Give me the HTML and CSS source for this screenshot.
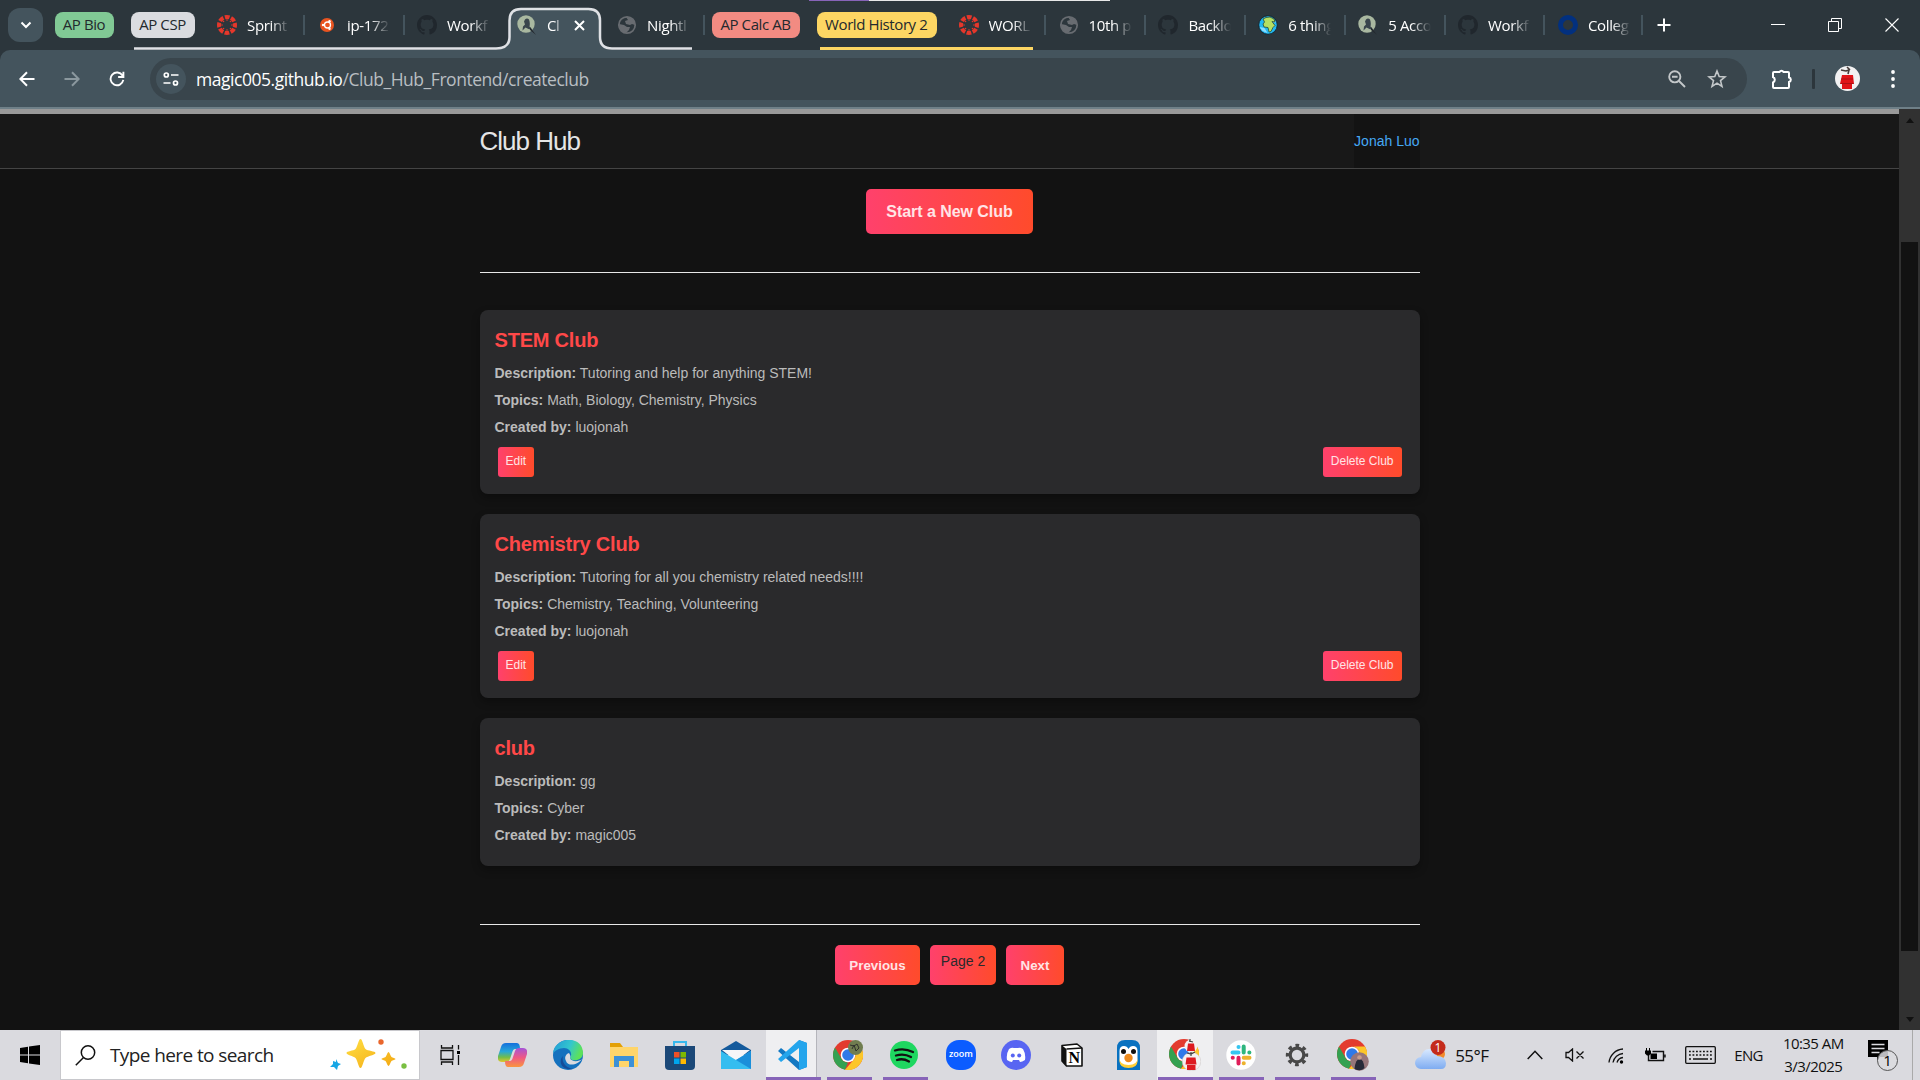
FILE: index.html
```html
<!DOCTYPE html>
<html lang="en">
<head>
<meta charset="utf-8">
<title>Club Hub</title>
<link rel="stylesheet" href="styles.css">
</head>
<body>
<svg class="defs" width="0" height="0" aria-hidden="true">
  <symbol id="canvas" viewBox="0 0 20 20">
    <circle cx="10" cy="10" r="8" fill="none" stroke="#e5372b" stroke-width="4" stroke-dasharray="4.7 1.58" stroke-dashoffset="2.35"/>
    <g fill="#e5372b"><circle cx="10" cy="5" r=".8"/><circle cx="10" cy="15" r=".8"/><circle cx="5" cy="10" r=".8"/><circle cx="15" cy="10" r=".8"/><circle cx="6.5" cy="6.5" r=".8"/><circle cx="13.5" cy="6.5" r=".8"/><circle cx="6.5" cy="13.5" r=".8"/><circle cx="13.5" cy="13.5" r=".8"/></g>
  </symbol>
  <symbol id="github" viewBox="0 0 16 16">
    <path fill="#20272d" d="M8 0C3.58 0 0 3.58 0 8c0 3.54 2.29 6.53 5.47 7.59.4.07.55-.17.55-.38 0-.19-.01-.82-.01-1.49-2.01.37-2.53-.49-2.69-.94-.09-.23-.48-.94-.82-1.13-.28-.15-.68-.52-.01-.53.63-.01 1.08.58 1.23.82.72 1.21 1.87.87 2.33.66.07-.52.28-.87.51-1.07-1.78-.2-3.64-.89-3.64-3.95 0-.87.31-1.59.82-2.15-.08-.2-.36-1.02.08-2.12 0 0 .67-.21 2.2.82.64-.18 1.32-.27 2-.27s1.36.09 2 .27c1.53-1.04 2.2-.82 2.2-.82.44 1.1.16 1.92.08 2.12.51.56.82 1.27.82 2.15 0 3.07-1.87 3.75-3.65 3.95.29.25.54.73.54 1.48 0 1.07-.01 1.93-.01 2.2 0 .21.15.46.55.38A8.01 8.01 0 0 0 16 8c0-4.42-3.58-8-8-8z"/>
  </symbol>
  <symbol id="globe" viewBox="0 0 20 20">
    <circle cx="10" cy="10" r="8.2" fill="#2c363c" stroke="#686c71" stroke-width="1.7"/>
    <path fill="#686c71" d="M2 9l5 1 3 2 3 0-1 3-3 3C5 18 2 14 2 9zM9 2c3 0 6 1 8 4l1 4-3-1-2 1-4-1-1-3 3-1z"/>
  </symbol>
  <symbol id="pale" viewBox="0 0 20 20">
    <circle cx="9" cy="9" r="8.700" fill="#a9b8a0"/>
    <path fill="#39454c" d="M8 4.500q2-2 4 0c1 3 1 5 .5 7l3 3.500-4-1-3-1.500-3 3 .5-4 2-2-1-3z"/><path fill="#24292e" d="M13 12l6 8-6-5z"/>
  </symbol>
  <symbol id="chrome" viewBox="0 0 30 30">
    <circle cx="15" cy="15" r="15" fill="#e33b2e"/>
    <path fill="#34a151" d="M2 7.5 8.5 18.7A7.5 7.5 0 0 0 15 22.5L12 29.7A15 15 0 0 1 2 7.5Z"/>
    <path fill="#fcc629" d="M15 7.5H28A15 15 0 0 1 12 29.7L21.5 18.7A7.5 7.5 0 0 0 15 7.5Z"/>
    <circle cx="15" cy="15" r="7.3" fill="#fff"/><circle cx="15" cy="15" r="5.8" fill="#3079e8"/>
  </symbol>
</svg>

<div class="tabstrip">
  <div class="topline"></div>
  <div class="tabsearch"><svg width="12" height="8" viewBox="0 0 12 8"><path d="M1.5 1.5 6 6l4.500-4.500" fill="none" stroke="#fff" stroke-width="2"/></svg></div>
  <div class="pill green">AP Bio</div>
  <div class="group csp">
    <svg class="outline" width="562" height="50" viewBox="0 0 562 50"><path class="tabfill" d="M364 50Q378.500 48 378.500 37V20.500Q378.500 9 390 9H457.500Q469 9 469 20.500V37Q469 48.500 480 50Z"/><path d="M3 48.500H365Q378.500 48.500 378.500 37V20.500Q378.500 9 390 9H457.500Q469 9 469 20.500V37Q469 48.500 481 48.500H561" fill="none" stroke="#dfe1e5" stroke-width="2.500"/></svg>
    <div class="pill grey">AP CSP</div>
    <div class="tab first"><svg width="20" height="20"><use href="#canvas"/></svg><span>Sprint</span></div>
    <div class="tab"><svg width="20" height="20" viewBox="0 0 20 20"><circle cx="10" cy="10" r="7" fill="#e95420"/><circle cx="10.500" cy="10" r="3" fill="none" stroke="#fff" stroke-width="1.300"/><circle cx="6" cy="10" r="1.200" fill="#fff"/><circle cx="12.500" cy="6.300" r="1.200" fill="#fff"/><circle cx="12.500" cy="13.700" r="1.200" fill="#fff"/></svg><span>ip-172</span></div>
    <div class="tab nosep"><svg width="20" height="20"><use href="#github"/></svg><span>Workf</span></div>
    <div class="tab nosep active"><svg width="20" height="20"><use href="#pale"/></svg><span>Cl</span><svg class="close" width="11" height="11" viewBox="0 0 11 11"><path d="M1 1l9 9M10 1l-9 9" stroke="#fff" stroke-width="2"/></svg></div>
    <div class="tab"><svg width="20" height="20"><use href="#globe"/></svg><span>Nightl</span></div>
  </div>
  <div class="pill red">AP Calc AB</div>
  <div class="group history">
    <div class="pill yellow">World History 2</div>
    <div class="tab first"><svg width="20" height="20"><use href="#canvas"/></svg><span>WORL</span></div>
  </div>
  <div class="tab"><svg width="20" height="20"><use href="#globe"/></svg><span>10th p</span></div>
  <div class="tab"><svg width="20" height="20"><use href="#github"/></svg><span>Backlo</span></div>
  <div class="tab"><svg width="20" height="20" viewBox="0 0 20 20"><circle cx="10" cy="10" r="9.300" fill="#21b8f4" stroke="#15232b"/><path fill="#8bdcff" d="M1.500 12l5 1 3 5-5-2zM14 3l4 4-2 1z"/><path fill="#b5df62" stroke="#294b32" stroke-width=".8" d="M5 4l3-1.500 4-.5 4 2 1 3-3-.5 3 4-2 2-2 4-2 .5-1-4.500-4-.5-1-3 1.500-2z"/></svg><span>6 thing</span></div>
  <div class="tab"><svg width="20" height="20"><use href="#pale"/></svg><span>5 Acco</span></div>
  <div class="tab"><svg width="20" height="20"><use href="#github"/></svg><span>Workf</span></div>
  <div class="tab last"><svg width="20" height="20" viewBox="0 0 20 20"><circle cx="10" cy="10" r="7.500" fill="none" stroke="#02307f" stroke-width="5"/></svg><span>Colleg</span></div>
  <svg class="plus" width="14" height="14" viewBox="0 0 14 14"><path d="M7 .5v13M.5 7h13" stroke="#fff" stroke-width="2"/></svg>
  <div class="wincontrols">
    <svg width="14" height="14" viewBox="0 0 14 14"><path d="M0 6.500h14" stroke="#fff"/></svg>
    <svg width="14" height="14" viewBox="0 0 14 14"><path d="M.5 3.500h10v10H.5zM3.500 3V.5h10v10H11" fill="none" stroke="#fff"/></svg>
    <svg width="14" height="14" viewBox="0 0 14 14"><path d="M.5.5l13 13m0-13l-13 13" stroke="#fff" stroke-width="1.100"/></svg>
  </div>
</div>

<div class="toolbar">
  <svg class="back" width="16" height="16" viewBox="0 0 16 16"><path d="M15.500 8H1.500M8 1.200 1.300 8 8 14.800" fill="none" stroke="#fff" stroke-width="2"/></svg>
  <svg class="fwd" width="16" height="16" viewBox="0 0 16 16"><path d="M.5 8h14M8 1.200 14.700 8 8 14.800" fill="none" stroke="#8b989e" stroke-width="2"/></svg>
  <svg class="reload" width="16" height="16" viewBox="0 0 17 17"><path d="M14.300 4.800A6.800 6.800 0 1 0 15.200 9.500M15.300.8v5.600H9.700" fill="none" stroke="#fff" stroke-width="2"/></svg>
  <div class="omnibox">
    <div class="siteinfo"><svg width="16" height="16" viewBox="0 0 16 16"><g fill="none" stroke="#fff" stroke-width="1.700"><circle cx="3.300" cy="4" r="2"/><path d="M8 4h7.500M.5 12h7"/><circle cx="12.500" cy="12" r="2"/></g></svg></div>
    <div class="url"><b>magic005.github.io</b>/Club_Hub_Frontend/createclub</div>
    <svg width="18" height="18" viewBox="0 0 18 18"><g fill="none" stroke="#c3c7c9" stroke-width="1.900"><circle cx="6.800" cy="6.800" r="5.600"/><path d="M11 11l6 6M4 6.800h5.600"/></g></svg>
    <svg class="star" width="20" height="20" viewBox="0 0 20 20"><path d="M10 2l2.200 5.500 5.800.4-4.500 3.700 1.500 5.800-5-3.200-5 3.200 1.500-5.800L2 7.900l5.800-.4z" fill="none" stroke="#c3c7c9" stroke-width="1.600"/></svg>
  </div>
  <svg class="puzzle" width="22" height="22" viewBox="0 0 22 22"><path d="M3 4H8.500a2.300 2.300 0 0 1 4 0H17q1 0 1 1v4.500a2.300 2.300 0 0 1 0 4.500v5q0 1-1 1H3q-1 0-1-1v-4.500a3 3 0 0 0 0-5.500V5q0-1 1-1z" fill="none" stroke="#fff" stroke-width="2"/></svg>
  <div class="divider"></div>
  <svg class="avatar" width="25" height="25" viewBox="0 0 25 25"><circle cx="12.500" cy="12.500" r="12.500" fill="#f2f1f2"/><path fill="#e01318" d="M7 9h11l1 9H5zM7 18h10v5H7z"/><path stroke="#971015" stroke-width=".7" d="M6 13h12M5.500 17.500h13"/><path d="M6 4l5 1 3-1-1 4M12 1l3 3" stroke="#453b38" stroke-width="1.600" fill="none"/></svg>
  <svg class="dots" width="4" height="20" viewBox="0 0 4 20"><g fill="#fff"><circle cx="2" cy="3" r="1.900"/><circle cx="2" cy="10" r="1.900"/><circle cx="2" cy="17" r="1.900"/></g></svg>
</div>

<div class="viewport">
  <div class="page">
    <header class="site-header"><div class="wrap head"><a class="site-title">Club Hub</a><a class="user">Jonah Luo</a></div></header>
    <main class="wrap main">
      <button class="btn start">Start a New Club</button>
      <div class="rule"></div>
      <section class="cards">
        <article class="card"><h3>STEM Club</h3><p><strong>Description:</strong> Tutoring and help for anything STEM!</p><p><strong>Topics:</strong> Math, Biology, Chemistry, Physics</p><p><strong>Created by:</strong> luojonah</p><div class="actions"><button class="btn small">Edit</button><button class="btn small">Delete Club</button></div></article>
        <article class="card"><h3>Chemistry Club</h3><p><strong>Description:</strong> Tutoring for all you chemistry related needs!!!!</p><p><strong>Topics:</strong> Chemistry, Teaching, Volunteering</p><p><strong>Created by:</strong> luojonah</p><div class="actions"><button class="btn small">Edit</button><button class="btn small">Delete Club</button></div></article>
        <article class="card"><h3>club</h3><p><strong>Description:</strong> gg</p><p><strong>Topics:</strong> Cyber</p><p><strong>Created by:</strong> magic005</p></article>
      </section>
      <div class="rule"></div>
      <nav class="pager"><button class="btn prev">Previous</button><span class="btn current">Page 2</span><button class="btn next">Next</button></nav>
    </main>
  </div>
  <div class="scrollbar"><i class="up"></i><div class="thumb"></div><i class="down"></i></div>
</div>

<div class="taskbar">
  <div class="startbtn"><svg width="20" height="20" viewBox="0 0 20 20"><path d="M0 3l8-1.200V9.500H0zM9 1.600 20 0v9.500H9zM0 10.500h8v7.700L0 17zM9 10.500h11V20L9 18.400z"/></svg></div>
  <div class="search">
    <svg width="21" height="21" viewBox="0 0 21 21"><circle cx="13" cy="7.500" r="6.700" fill="none" stroke="#111" stroke-width="1.500"/><path d="M8.500 12.500.8 20.200" stroke="#111" stroke-width="1.500"/></svg>
    <span>Type here to search</span>
    <svg class="sparkles" width="80" height="34" viewBox="0 0 80 34"><defs><linearGradient id="gold" x2="1" y2="1"><stop stop-color="#ffdf43"/><stop offset="1" stop-color="#f3a712"/></linearGradient></defs><path fill="url(#gold)" d="M30.500 1c2 0 3 8 5 10s10 2 10 4-8 3-10 5-3 10-5 10-3-8-5-10-9-3-9-5 7-2 9-4 3-10 5-10zM58.500 14c1 0 2 4 3 5s4 1 4 2-3 1-4 2-2 5-3 5-2-4-3-5-4-1-4-2 3-1 4-2 2-5 3-5z"/><path fill="#18a7e5" d="M6 21l2 4 3 1-3 2-1 4-3-3-4 0 3-3v-3l3 1z"/><circle cx="51" cy="4" r="2.700" fill="#e9662c"/><circle cx="74" cy="28" r="2.700" fill="#79bf42"/></svg>
  </div>
  <div class="taskview"><svg width="21" height="20" viewBox="0 0 21 20"><path d="M1.500 0v3h11V0M1.500 20v-3h11v3M1 5.500h12v9H1zM18.500 0v4.500M18.500 10v10" fill="none" stroke="#111" stroke-width="1.300"/><path d="M17 6h3v3h-3z"/></svg></div>
  <div class="apps">
    <div class="app"><svg width="29" height="26" viewBox="0 0 29 26"><defs><linearGradient id="cpa" x2="0" y2="1"><stop stop-color="#1570dc"/><stop offset=".45" stop-color="#27a7d9"/><stop offset=".75" stop-color="#72bd4b"/><stop offset="1" stop-color="#e4c72d"/></linearGradient><linearGradient id="cpb" x2="0" y2="1"><stop stop-color="#a553d8"/><stop offset=".5" stop-color="#ee5885"/><stop offset="1" stop-color="#fa963e"/></linearGradient></defs><path fill="url(#cpa)" d="M8 1h11q3 0 3 6h-5q-2 0-3 4l-2 6q-1 3-4 3H4q-5 0-4-6L3 5q1-4 5-4z"/><path fill="url(#cpb)" d="M21 25H10q-3 0-3-6h5q2 0 3-4l2-6q1-3 4-3h4q5 0 4 6l-3 9q-1 4-5 4z"/></svg></div>
    <div class="app"><svg width="30" height="30" viewBox="0 0 30 30"><defs><linearGradient id="eg" x2="1" y2=".3"><stop stop-color="#2299d8"/><stop offset=".6" stop-color="#33c6ce"/><stop offset="1" stop-color="#5ce15b"/></linearGradient></defs><circle cx="15" cy="15" r="15" fill="#1471be"/><path fill="url(#eg)" d="M0 13C2-4 30-5 30 13c0 8-11 9-13 5 3-4 0-10-6-10C6 8 2 11 0 13z"/><path fill="#dadadf" d="M17 18c1 4 9 4 12 1-4 6-14 8-16 2-2-4 0-7 3-8 1 2 2 3 1 5z"/><path fill="#164c98" d="M10 16c-2 7 4 12 10 13C8 31 5 21 10 16z"/></svg></div>
    <div class="app"><svg width="30" height="25" viewBox="0 0 30 25"><path fill="#e3a005" d="M1 0h10l3 4H1z"/><path fill="#ffd56a" d="M1 4h28v20H1z"/><path fill="#3d91d7" d="M5 24V13h20v11h-5v-6H10v6z"/></svg></div>
    <div class="app"><svg width="30" height="30" viewBox="0 0 30 30"><path d="M9 6V2h12v4" fill="none" stroke="#39b9ed" stroke-width="2"/><path fill="#1b4878" d="M0 6h30v20q0 4-4 4H4q-4 0-4-4z"/><path fill="#ef5028" d="M9 12h5.500v5.500H9z"/><path fill="#7eb900" d="M15.500 12H21v5.500h-5.500z"/><path fill="#00a5ee" d="M9 18.500h5.500V24H9z"/><path fill="#ffb902" d="M15.500 18.500H21V24h-5.500z"/></svg></div>
    <div class="app"><svg width="30" height="28" viewBox="0 0 30 28"><path fill="#145a9c" d="M0 9 15 0l15 9v5H0z"/><path fill="#f6f6f8" d="M1 9h28L15 20z"/><path fill="#35bdf0" d="M0 10l15 9 15-9v18H0z"/><path fill="#1a8fda" d="M15 19 30 28V10z"/></svg></div>
    <div class="app on lit stacked"><svg width="30" height="30" viewBox="0 0 30 30"><path fill="#1378c2" d="M22 0l8 3v24l-8 3L1 11l3-3 18 14z"/><path fill="#24a5ec" d="M22 0l8 3v24l-8 3V8L4 22l-3-3z"/></svg></div>
    <div class="app on"><svg width="30" height="30" viewBox="0 0 30 30"><use href="#chrome"/><circle cx="22.500" cy="7.500" r="7.500" fill="#707d50"/><path d="M17 5l4 1 3-2 2 4M19 9l2-4 2 6 3-3" stroke="#30322d" fill="none"/></svg></div>
    <div class="app on"><svg width="28" height="28" viewBox="0 0 28 28"><circle cx="14" cy="14" r="14" fill="#1ed760"/><path d="M5 9.500q9-3 18 1.500M6 14.500q8-2.500 15 1.500M7 19q6-2 12 1.500" fill="none" stroke="#111" stroke-width="2.300" stroke-linecap="round"/></svg></div>
    <div class="app"><div class="zoomlogo">zoom</div></div>
    <div class="app"><svg width="30" height="30" viewBox="0 0 30 30"><circle cx="15" cy="15" r="15" fill="#5865f2"/><path fill="#fff" d="M8 9q3-2 5-1h4q2-1 5 1 3 5 2 11-3 2-5 2l-1-2h-6l-1 2q-2 0-5-2-1-6 2-11z"/><circle cx="11.800" cy="15.500" r="2" fill="#5865f2"/><circle cx="18.200" cy="15.500" r="2" fill="#5865f2"/></svg></div>
    <div class="app"><svg width="22" height="24" viewBox="0 0 22 24"><path fill="#fff" stroke="#111" stroke-width="1.600" stroke-linejoin="round" d="M1 2.500 16 1l5 4v18H5.500L1 18z"/><path fill="#111" d="M1 2.500 5.500 6v17L1 18z"/><path fill="none" stroke="#111" stroke-width="1.600" d="M5.500 6 21 5"/><text x="13.200" y="20" text-anchor="middle" class="n">N</text></svg></div>
    <div class="app"><svg width="23" height="30" viewBox="0 0 23 30"><path fill="#0871c0" d="M0 30V8q0-8 8-8h7q8 0 8 8v22z"/><path fill="#fff" d="M2.500 11q0-5 4.500-5 3 0 4.500 3Q13 6 16 6q4.500 0 4.500 5v9q0 7-9 7t-9-7z"/><path fill="#ffce36" d="M2.500 18q0 7 9 7t9-7v3q0 7-9 7t-9-7z"/><circle cx="6.500" cy="11.500" r="2.500" fill="#111"/><circle cx="16.500" cy="11.500" r="2.500" fill="#111"/><circle cx="11.500" cy="18" r="4.200" fill="#ee8a1d"/></svg></div>
    <div class="app on lit"><svg width="32" height="32" viewBox="0 0 32 32"><svg width="30" height="30"><use href="#chrome"/></svg><circle cx="22" cy="7" r="6.500" fill="#f4f1f1"/><circle cx="22.500" cy="22.500" r="9.300" fill="#f4f1f1" stroke="#c9c4c4" stroke-width=".5"/><path fill="#dd1a20" d="M19 4.500h6l1 7.500h-8zM17.500 18.500h9l1 7H16.500zM18 26h8.500v5H18z"/><path d="M20 2l4 1M21 0v3M18 14l4 1 4-2M22 13v4" stroke="#444" stroke-width="1.200" fill="none"/></svg></div>
    <div class="app on"><svg width="30" height="30" viewBox="0 0 30 30"><circle cx="15" cy="15" r="14.700" fill="#fff"/><g fill="none" stroke-width="4" stroke-linecap="round"><path stroke="#36c5f0" d="M6.500 12.500h6M12.500 7h.1"/><path stroke="#2eb67d" d="M17.700 6.500v6M23.300 12.500h.1"/><path stroke="#ecb22e" d="M17.700 17.700h5.800M17.700 23.300h.1"/><path stroke="#e01e5a" d="M12.500 17.700v5.800M6.700 17.700h.1"/></g></svg></div>
    <div class="app on"><svg width="24" height="24" viewBox="0 0 24 24"><circle cx="12" cy="12" r="6.800" fill="none" stroke="#484848" stroke-width="3.200"/><circle cx="12" cy="12" r="9.600" fill="none" stroke="#484848" stroke-width="3.200" stroke-dasharray="3.700 3.840" stroke-dashoffset="1.850"/></svg></div>
    <div class="app on"><svg width="32" height="32" viewBox="0 0 32 32"><svg width="30" height="30"><use href="#chrome"/></svg><circle cx="22.500" cy="22.500" r="9.300" fill="#96757a"/><path d="M17.500 30q1-10 5-10t5 9q-4 4-10 1z" fill="#272938"/><circle cx="22.500" cy="18.500" r="2.300" fill="#c79c8c"/></svg></div>
  </div>
  <div class="tray">
    <svg class="weather" width="32" height="30" viewBox="0 0 32 30"><defs><linearGradient id="cl" x2="0" y2="1"><stop stop-color="#d9e9ff"/><stop offset="1" stop-color="#7eacf1"/></linearGradient></defs><circle cx="24" cy="14" r="6" fill="#f28a2b"/><path fill="url(#cl)" d="M6 29a6 6 0 0 1 0-12Q8 9 14 9t8 7q8 0 9 7 0 6-5 6z"/><circle cx="23" cy="7.500" r="7.500" fill="#c42b1c"/><text x="23" y="12" text-anchor="middle" fill="#fff" font-size="12">1</text></svg>
    <span class="temp">55°F</span>
    <svg class="caret" width="16" height="10" viewBox="0 0 16 10"><path d="M.7 9 8 1.300 15.300 9" fill="none" stroke="#111" stroke-width="1.500"/></svg>
    <svg class="speaker" width="20" height="14" viewBox="0 0 20 14"><path d="M1 4.500h2.500L7.500 1v12l-4-3.500H1zM11.500 3.500l7 7m0-7l-7 7" fill="none" stroke="#111" stroke-width="1.300"/></svg>
    <svg class="wifi" width="16" height="17" viewBox="0 0 16 17"><g fill="none" stroke="#111" stroke-width="1.300"><path d="M1 15.500A15 15 0 0 1 15 2M5 15.500A11 11 0 0 1 15 6.500M9 15.500A7 7 0 0 1 15 10.500"/></g><circle cx="13.500" cy="15" r="1.700"/></svg>
    <svg class="battery" width="21" height="15" viewBox="0 0 21 15"><path d="M3.500 7v5.500h15v-9H7.500M20 6.500v3" fill="none" stroke="#111" stroke-width="1.400"/><path d="M5.500 5.500H12v5.500H5.500zM0 2.500h6v3L4 7.500H2L0 5.500zM1 0h1v3H1zM4 0h1v3H4z"/></svg>
    <svg class="keyboard" width="31" height="18" viewBox="0 0 31 18"><rect x=".7" y=".7" width="29.600" height="16.600" rx="1" fill="none" stroke="#111" stroke-width="1.300"/><path d="M4 5.500h23M4 9h23" stroke="#111" stroke-width="1.600" stroke-dasharray="1.800 1.700"/><path d="M4 13h2M8 13h15M25 13h2" stroke="#111" stroke-width="1.400"/></svg>
    <span class="lang">ENG</span>
    <div class="clock"><span>10:35 AM</span><span>3/3/2025</span></div>
    <svg class="notif" width="32" height="32" viewBox="0 0 32 32"><path d="M1 1h20v17H13l-3 4v-4H1z"/><path d="M4.500 5.500h13M4.500 9.500h13M4.500 13.500h8" stroke="#dadadf" stroke-width="1.500"/><circle cx="20.500" cy="21.500" r="10" fill="#dadadf" fill-opacity=".85" stroke="#555"/><text x="20.500" y="27" text-anchor="middle" font-size="15">1</text></svg>
    <div class="peek"></div>
  </div>
</div>
</body>
</html>
```
FILE: styles.css
```css
* { box-sizing: border-box; }
html, body { margin: 0; width: 1920px; height: 1080px; overflow: hidden; background: #121212; }
body { display: flex; flex-direction: column; font-family: "Open Sans", "Noto Sans", sans-serif; }
svg { display: block; flex: none; }
.defs { position: absolute; }

.tabstrip { position: relative; height: 50px; flex: none; display: flex; align-items: center; padding-left: 8px; background: #2c363c; }
.topline { position: absolute; left: 809px; top: 0; width: 301px; height: 1px; background: linear-gradient(to right, #8764b8 60px, #e8e8e8 60px); }
.tabsearch { width: 35px; height: 34px; border-radius: 12px; background: #44545d; display: flex; align-items: center; justify-content: center; flex: none; }
.pill { position: relative; height: 26px; border-radius: 8px; flex: none; color: #23292d; font-size: 15px; line-height: 25px; text-align: center; white-space: nowrap; letter-spacing: -.4px; padding-right: 1px; }
.green { width: 59px; margin-left: 12px; background: #81c995; }
.grey { width: 64px; background: #dadce0; }
.red { width: 88px; margin-left: 7px; background: #f28b82; }
.yellow { width: 119.500px; background: #fdd663; }
.group { position: relative; height: 50px; display: flex; align-items: center; flex: none; }
.csp { margin-left: 17px; }
.outline { position: absolute; left: 0; top: 0; }
.tabfill { fill: #44545d; }
.history { margin-left: 17px; }
.history::after { content: ""; position: absolute; left: 3px; right: 13px; bottom: 0; height: 3px; background: #fdd663; }
.tab { position: relative; width: 100px; height: 20px; padding-left: 12px; display: flex; align-items: center; gap: 10px; flex: none; border-right: 2px solid #44545d; }
.tabstrip > .tab { width: 99.900px; padding-left: 12.500px; }
.tabstrip > .tab.last { width: 98px; }
.tab.first { margin-left: 10px; }
.history .tab { width: 99.500px; }
.tab.nosep { border-color: transparent; }
.tab span { width: 43px; overflow: hidden; white-space: nowrap; color: #fff; font-size: 15px; line-height: 22px; letter-spacing: -.35px; -webkit-mask-image: linear-gradient(to right, #000 55%, transparent); mask-image: linear-gradient(to right, #000 55%, transparent); }
.tab.active span { width: 15px; }
.close { margin-left: 2px; }
.plus { margin-left: 14px; }
.wincontrols { display: flex; gap: 43px; margin-left: auto; padding-right: 21.500px; }

.toolbar { height: 59px; flex: none; display: flex; align-items: center; background: #44545d; border-bottom: 2px solid #6f8088; padding-left: 19px; border-radius: 10px 10px 0 0; box-shadow: 0 -10px 0 0 #2c363c; clip-path: inset(0); background-clip: padding-box; }
html { background: #2c363c; }
.fwd { margin-left: 29px; }
.reload { margin-left: 29px; }
.omnibox { width: 1597px; height: 42px; margin-left: 25px; border-radius: 21px; background: #39454c; display: flex; align-items: center; padding: 0 20px 0 6px; }
.siteinfo { width: 30px; height: 30px; border-radius: 50%; background: #44545d; display: flex; align-items: center; justify-content: center; }
.url { margin-left: 10px; margin-right: auto; color: #b8bec2; font-size: 17.500px; letter-spacing: -.46px; white-space: nowrap; }
.url b { color: #fff; font-weight: 400; }
.star { margin-left: 21px; }
.puzzle { margin-left: 24px; }
.divider { width: 3px; height: 20px; margin-left: 19px; background: #2c363c; border-radius: 1px; }
.avatar { margin-left: 20px; }
.dots { margin-left: 31px; }

.viewport { flex: 1; display: flex; min-height: 0; background: #121212; font-family: "Liberation Sans", Arial, sans-serif; }
.page { width: 1899px; background: #121212; }
.wrap { width: 940px; margin: 0 auto; }
.site-header { height: 60px; background: #181818; border-top: 5px solid #999; border-bottom: 1px solid #444; }
.head { height: 54px; display: flex; justify-content: space-between; line-height: 54px; }
.site-title { color: #e5e5e5; font-size: 26px; letter-spacing: -1px; }
.user { background: #131313; color: #46a9f5; font-size: 14px; }
.main { padding-top: 20px; display: flex; flex-direction: column; align-items: center; }
.btn { border: 0; border-radius: 5px; background: linear-gradient(to right, #ff416c, #ff4b2b); color: #ffe4e6; font-family: inherit; font-weight: 700; padding: 0; text-align: center; }
.start { width: 167px; height: 45px; font-size: 16px; letter-spacing: -.05px; }
.rule { width: 100%; height: 1px; background: #e8e8e8; margin-top: 38px; }
.cards { width: 100%; margin-top: 37px; display: flex; flex-direction: column; gap: 20px; }
.card { padding: 15px; height: 184px; border-radius: 8px; background: #2a2a2c; color: #bbb; box-shadow: 0 4px 8px rgba(0,0,0,.3); }
.card:last-child { height: 148px; }
.card h3 { margin: 0 0 7.700px; color: #ff4848; font-size: 20px; line-height: 30px; letter-spacing: -.2px; }
.card p { margin: 0 0 6.200px; font-size: 14px; line-height: 21px; }
.actions { display: flex; justify-content: space-between; padding: 3px; height: 35.500px; }
.small { height: 29.500px; border-radius: 3px; font-size: 12px; font-weight: 400; padding: 0 8px 2px; }
.cards + .rule { margin-top: 58px; }
.pager { display: flex; gap: 10px; margin-top: 20px; }
.pager .btn { height: 40px; font-size: 13.333px; }
.prev { width: 85px; }
.next { width: 58px; }
.pager .current { width: 66px; font-size: 14px; font-weight: 400; color: #2a2a2c; line-height: 33px; }
.scrollbar { width: 21px; background: #313131; display: flex; flex-direction: column; align-items: center; }
.scrollbar i { width: 0; height: 0; border: 4.500px solid transparent; flex: none; }
.up { border-bottom: 5px solid #111 !important; margin-top: 5px; }
.thumb { width: 17px; height: 709px; margin-top: 118.500px; background: #121212; }
.down { border-top: 5px solid #111 !important; margin-top: auto; margin-bottom: 4px; }

.taskbar { height: 50px; flex: none; display: flex; background: #dadadf; }
.startbtn { width: 60px; display: flex; align-items: center; justify-content: center; }
.search { width: 360px; background: #fff; border: 1px solid #c8c8cc; display: flex; align-items: center; padding-left: 14px; color: #222; font-size: 19px; }
.search span { margin-left: 14px; width: 164px; white-space: nowrap; letter-spacing: -.6px; }
.sparkles { margin-left: 56px; }
.taskview { width: 64.500px; display: flex; align-items: center; justify-content: center; padding-right: 4px; }
.apps { display: flex; }
.app { position: relative; width: 56.050px; display: flex; align-items: center; justify-content: center; }
.app > svg, .zoomlogo { position: relative; }
.app > svg { left: -.500px; }
.n { font: 700 16px "Liberation Serif", serif; }
.app.lit::before { content: ""; position: absolute; inset: 0; background: #efeff1; }
.app.on::after { content: ""; position: absolute; left: 6px; right: 5px; bottom: 0; height: 3px; background: #8764b8; }
.app.lit::after { left: 1px; right: 0; }
.app.stacked::before { left: 1px; right: 4px; border-right: 1px solid #b5b5bb; }
.zoomlogo { width: 30px; height: 30px; border-radius: 13px; background: #0b5cff; color: #fff; font: 600 9px/28px "Open Sans", sans-serif; text-align: center; }
.tray { flex: 1; display: flex; align-items: center; color: #111; font-size: 15px; white-space: nowrap; }
.weather { margin-left: 34px; }
.temp { margin-left: 8px; width: 36px; font-size: 17px; letter-spacing: -.6px; }
.caret { margin-left: 36px; }
.speaker { margin-left: 22px; }
.wifi { margin-left: 23px; }
.battery { margin-left: 21px; }
.keyboard { margin-left: 19px; }
.lang { margin-left: 18px; width: 29px; letter-spacing: -.7px; }
.clock { margin-left: 19px; width: 62px; display: flex; flex-direction: column; align-items: center; line-height: 23px; font-size: 15px; letter-spacing: -.55px; }
.notif { margin-left: 23px; }
.peek { width: 1px; height: 50px; background: #aaa; margin-left: 13px; }
```
